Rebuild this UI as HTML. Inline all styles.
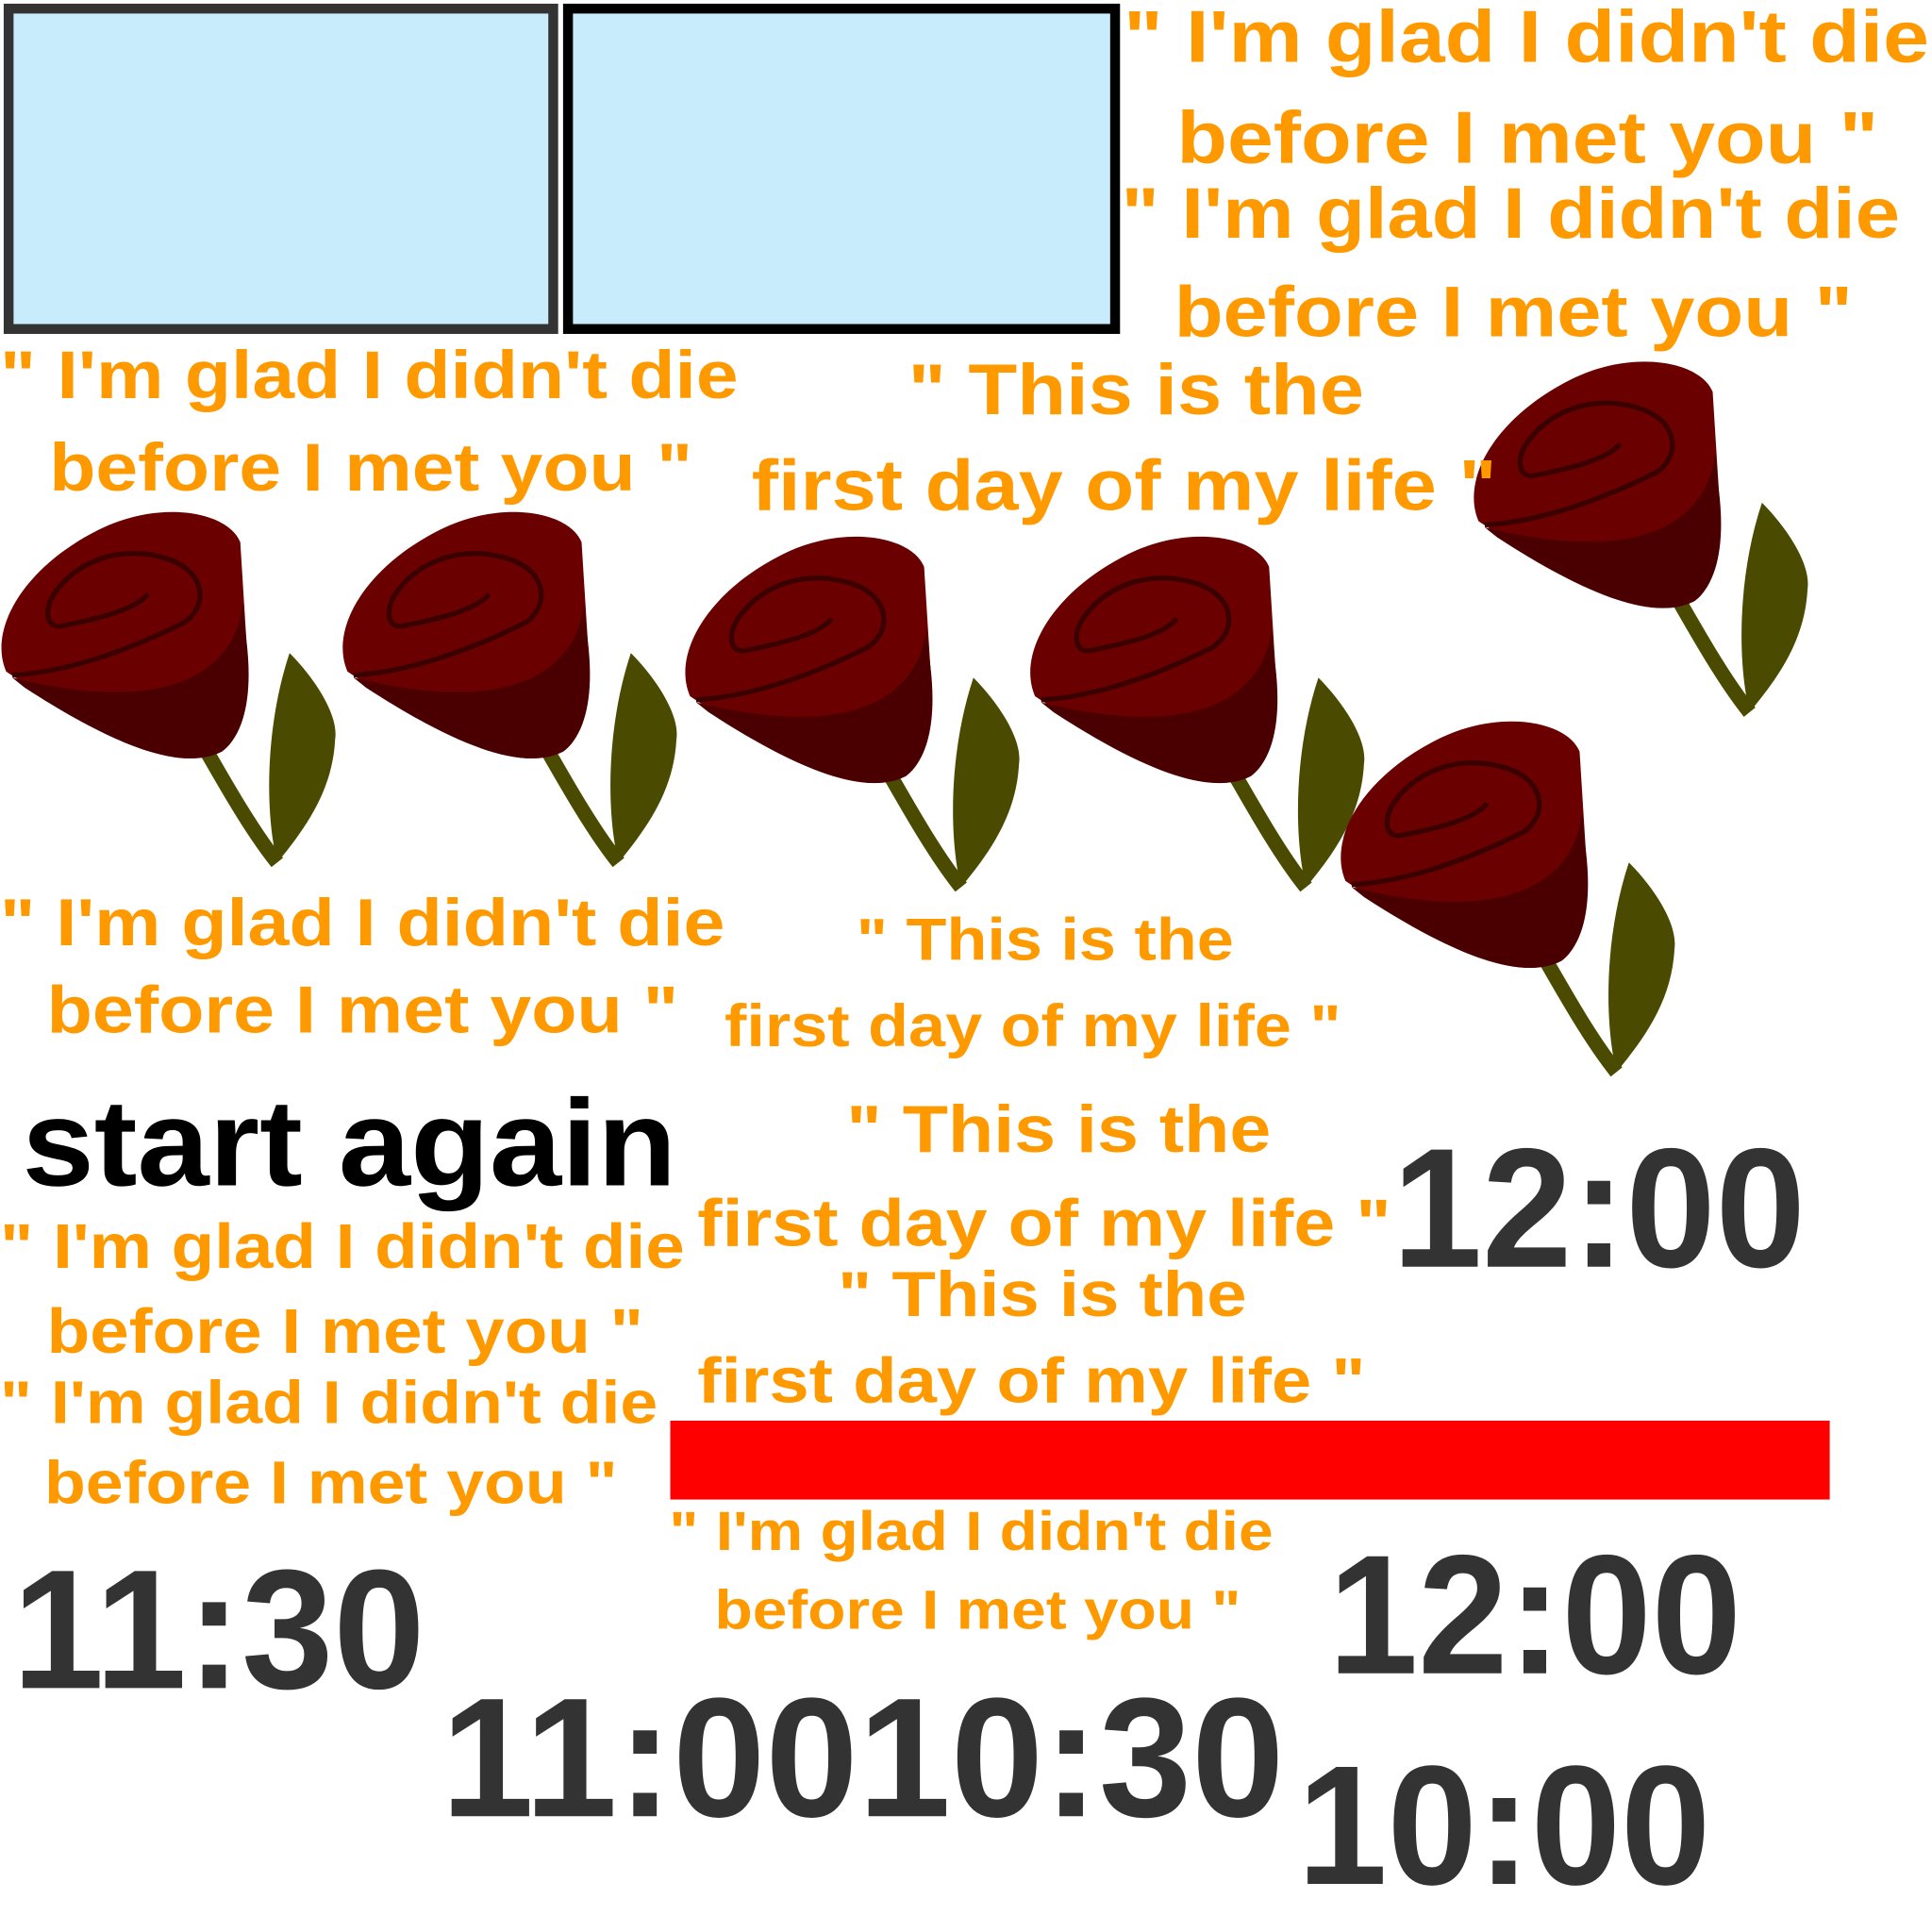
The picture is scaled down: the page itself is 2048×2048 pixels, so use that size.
<!DOCTYPE html>
<html><head><meta charset="utf-8"><style>
html,body{margin:0;padding:0;background:#fff;width:2048px;height:2048px;overflow:hidden}
#s{position:absolute;left:0;top:0;width:1568px;height:1568px;transform:scale(1.30612);transform-origin:0 0}
.t{position:absolute;font-family:"Liberation Sans",sans-serif;font-weight:bold;color:#ff9900;white-space:nowrap;line-height:1;transform:scaleX(1.12);transform-origin:0 0}
.k{position:absolute;font-family:"Liberation Sans",sans-serif;font-weight:bold;color:#333;white-space:nowrap;line-height:1;transform:scaleX(0.95);transform-origin:0 0}
.box{position:absolute;background:#c8ecfc;box-sizing:border-box}
svg{position:absolute;overflow:visible}
</style></head><body><div id="s">
<svg width="0" height="0" style="position:absolute"><defs>
<g id="rose">
<path d="M165,195 C185,230 205,265 225,290" stroke="#4a4a00" stroke-width="12" fill="none"/>
<path d="M225,290 C215,250 215,180 235,120 C255,140 275,170 272,190 C270,230 250,260 225,290 Z" fill="#4a4a00"/>
<path d="M5,135 C-10,100 20,50 80,20 C130,-5 185,5 195,30 L200,110 C205,160 195,190 180,200 C150,215 100,200 20,145 Z" fill="#6a0000"/>
<path d="M197,80 C190,140 130,170 10,140 L20,148 C100,200 150,215 180,200 C200,185 205,150 200,110 Z" fill="#4a0000"/>
<path d="M10,138 C60,135 110,115 150,95 C170,80 165,55 140,45 C100,30 60,45 42,75 C35,90 40,100 50,98 C80,92 110,85 120,72" stroke="#3a0000" stroke-width="4" fill="none"/>
</g></defs></svg>

<div class="box" style="left:3px;top:3px;width:450px;height:268px;border:8px solid #333"></div>
<div class="box" style="left:457px;top:3px;width:452px;height:268px;border:8px solid #000"></div>

<svg style="left:0;top:410px" width="280" height="290"><use href="#rose"/></svg>
<svg style="left:277px;top:410px" width="280" height="290"><use href="#rose"/></svg>
<svg style="left:555px;top:430px" width="280" height="290"><use href="#rose"/></svg>
<svg style="left:835px;top:430px" width="280" height="290"><use href="#rose"/></svg>
<svg style="left:1195px;top:288px" width="280" height="290"><use href="#rose"/></svg>
<svg style="left:1087px;top:580px" width="280" height="290"><use href="#rose"/></svg>

<div class="t" style="left:912px;top:0px;font-size:60px">" I'm glad I didn't die</div>
<div class="t" style="left:955px;top:82px;font-size:60px">before I met you "</div>
<div class="t" style="left:910px;top:145px;font-size:58px">" I'm glad I didn't die</div>
<div class="t" style="left:953px;top:225px;font-size:58px">before I met you "</div>
<div class="t" style="left:0px;top:277px;font-size:55px">" I'm glad I didn't die</div>
<div class="t" style="left:40px;top:352px;font-size:55px">before I met you "</div>
<div class="t" style="left:737px;top:288px;font-size:58px">" This is the</div>
<div class="t" style="left:610px;top:366px;font-size:58px">first day of my life "</div>
<div class="t" style="left:0px;top:722px;font-size:54px">" I'm glad I didn't die</div>
<div class="t" style="left:38px;top:793px;font-size:54px">before I met you "</div>
<div class="t" style="left:695px;top:740px;font-size:48px">" This is the</div>
<div class="t" style="left:588px;top:810px;font-size:48px">first day of my life "</div>
<div class="t" style="left:18px;top:878px;font-size:100px;color:#000;transform:scaleX(1.05)">start again</div>
<div class="t" style="left:687px;top:890px;font-size:54px">" This is the</div>
<div class="t" style="left:566px;top:966px;font-size:54px">first day of my life "</div>
<div class="k" style="left:1130px;top:912px;font-size:138px">12:00</div>
<div class="t" style="left:0px;top:986px;font-size:51px">" I'm glad I didn't die</div>
<div class="t" style="left:38px;top:1055px;font-size:51px">before I met you "</div>
<div class="t" style="left:680px;top:1025px;font-size:52px">" This is the</div>
<div class="t" style="left:566px;top:1095px;font-size:52px">first day of my life "</div>
<div class="t" style="left:0px;top:1115px;font-size:49px">" I'm glad I didn't die</div>
<div class="t" style="left:36px;top:1180px;font-size:49px">before I met you "</div>
<div style="position:absolute;left:544px;top:1153px;width:941px;height:64px;background:#ff0000"></div>
<div class="t" style="left:543px;top:1220px;font-size:45px">" I'm glad I didn't die</div>
<div class="t" style="left:580px;top:1284px;font-size:45px">before I met you "</div>
<div class="k" style="left:10px;top:1254px;font-size:138px;transform:scaleX(0.97)">11:30</div>
<div class="k" style="left:1078px;top:1242px;font-size:138px">12:00</div>
<div class="k" style="left:358px;top:1358px;font-size:138px;transform:scaleX(0.98)">11:0010:30</div>
<div class="k" style="left:1053px;top:1413px;font-size:138px">10:00</div>
</div></body></html>
